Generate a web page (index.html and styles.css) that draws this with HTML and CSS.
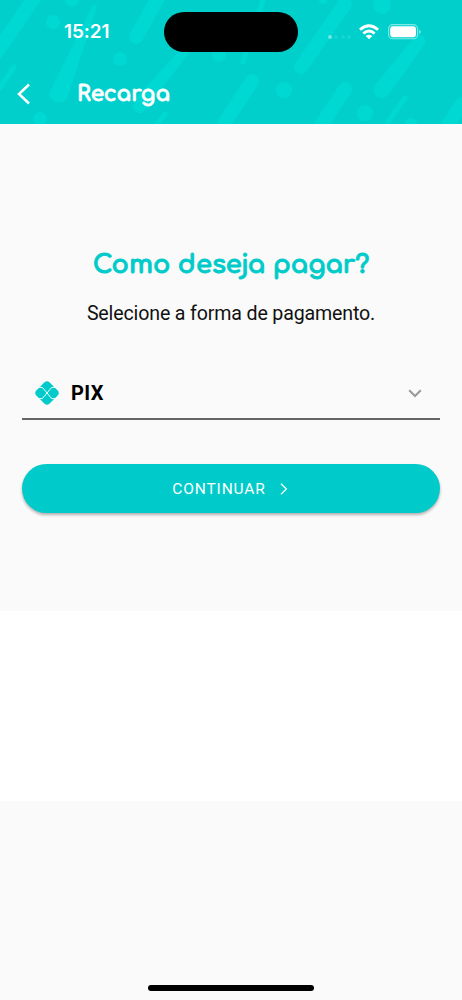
FILE: index.html
```html
<!DOCTYPE html>
<html lang="pt-BR">
  <head>
    <meta charset="UTF-8" />
    <meta name="viewport" content="width=device-width, initial-scale=1.0" />
    <title>Recarga</title>
    <link rel="stylesheet" href="styles.css">
  </head>
  <body>
    <header class="header">
      <svg class="pattern" viewBox="0 0 462 124">
        <g fill="none" stroke="#00d8d4" stroke-linecap="round">
          <path stroke-width="14" d="M37-6L-6 56M160-6L136 37M345 4L301 67M252 81L225 122M345 89L318 130M462 104L445 130" />
          <path stroke-width="5" d="M14 67L0 88M165 114L154 128M264-3L243 62M405 98L388 122" />
        </g>
        <g fill="#00d8d4">
          <path d="M93 5Q96 3 97 7L68 96Q64 105 55 102Q46 97 51 89Z" />
          <path d="M189 40L196 44L145 110Q140 117 134 110Q132 105 136 98Z" />
          <path d="M417 34Q426 34 425 44L389 94Q384 100 377 97Q371 92 375 85Z" />
          <circle cx="53" cy="22" r="7" />
          <circle cx="120" cy="59" r="7" />
          <circle cx="72" cy="0" r="7" />
          <circle cx="40" cy="119" r="7" />
          <circle cx="219" cy="55" r="7" />
          <circle cx="323" cy="0" r="4" />
          <circle cx="382" cy="5" r="9" />
          <circle cx="284" cy="90" r="8" />
          <circle cx="365" cy="113" r="8" />
          <circle cx="411" cy="125" r="7" />
        </g>
      </svg>

      <div class="status">
        <span class="time">15:21</span>
        <span class="island"></span>
        <span class="signal"><i></i><i></i><i></i><i></i></span>
        <svg class="wifi" width="20" height="16" viewBox="0 0 20 16">
          <g fill="none" stroke="#fff" stroke-width="2.8">
            <path d="M.9 5.8Q10-2.2 19.1 5.8" />
            <path d="M4.3 9.5Q10 4.6 15.7 9.5" />
          </g>
          <path fill="#fff" d="M6.7 12Q10 9.3 13.3 12L10 15.3Z" />
        </svg>
        <svg class="battery" width="33" height="16" viewBox="0 0 33 16">
          <rect x=".6" y=".6" width="29" height="14.2" rx="4.4" fill="none" stroke="#7ee9e7" stroke-width="1.1" />
          <rect x="2.2" y="2.2" width="25.8" height="11" rx="3" fill="#fff" />
          <path d="M31.2 5.4Q32.8 6 32.8 7.8T31.2 10.2Z" fill="#7ee9e7" />
        </svg>
      </div>

      <div class="toolbar">
        <svg class="back" width="14" height="22" viewBox="0 0 14 22">
          <path d="M12 1.5L2 11L12 20.5" fill="none" stroke="#fff" stroke-width="2.5" />
        </svg>
        <span class="title">Recarga</span>
      </div>
    </header>

    <main class="content">
      <h1>Como deseja pagar?</h1>
      <p>Selecione a forma de pagamento.</p>

      <div class="select">
        <svg class="pix" width="24" height="24" viewBox="0 0 24 24">
          <path d="M9.6 1.3Q12 -.9 14.4 1.3L22.7 9.6Q24.9 12 22.7 14.4L14.4 22.7Q12 24.9 9.6 22.7L1.3 14.4Q-.9 12 1.3 9.6Z" fill="#00cbca" />
          <path d="M4 6.3H6Q7.2 6.3 8 7.1L16 16.9Q16.8 17.7 18 17.7H20M4 17.7H6Q7.2 17.7 8 16.9L16 7.1Q16.8 6.3 18 6.3H20" fill="none" stroke="#fafafa" stroke-width="1" />
        </svg>
        <span class="option">PIX</span>
        <svg class="arrow" width="14" height="9" viewBox="0 0 14 9">
          <path d="M1.2 1.2L7 7L12.8 1.2" fill="none" stroke="#999" stroke-width="2" />
        </svg>
      </div>

      <button class="btn">
        CONTINUAR
        <svg width="8" height="12" viewBox="0 0 8 12">
          <path d="M1 .8L6.4 6L1 11.2" fill="none" stroke="#fff" stroke-width="1.2" />
        </svg>
      </button>
    </main>

    <div class="blank"></div>

    <footer class="footer">
      <div class="homeBar"></div>
    </footer>
  </body>
</html>
```

FILE: styles.css
```css
* {
  box-sizing: border-box;
}

body {
  margin: 0;
  height: 1000px;
  display: flex;
  flex-direction: column;
  overflow: hidden;
  background-color: #fafafa;
  font-family: Roboto, sans-serif;
}

.header {
  position: relative;
  height: 124px;
  background-color: #00cfcc;
  color: white;
}

.pattern {
  position: absolute;
  top: 0;
  left: 0;
  width: 462px;
  height: 124px;
}

.status {
  position: relative;
  display: flex;
  align-items: center;
  height: 63px;
  padding-left: 64px;
}

.time {
  width: 100px;
  font-family: Inter, sans-serif;
  font-size: 19px;
  font-weight: 600;
  letter-spacing: -0.1px;
}

.island {
  width: 134px;
  height: 40px;
  margin-top: 1px;
  border-radius: 20px;
  background-color: black;
}

.signal {
  display: flex;
  gap: 2.4px;
  margin: 10px 8px 0 30px;
}

.signal i {
  width: 4px;
  height: 4px;
  border-radius: 50%;
  background-color: #16d6d3;
}

.signal i:first-child {
  background-color: #70e7e4;
}

.wifi {
  margin-right: 9px;
}

.toolbar {
  position: relative;
  display: flex;
  align-items: center;
  height: 61px;
  padding-left: 17px;
}

.title {
  margin-left: 46px;
  font-family: Comfortaa, Quicksand, Lato, sans-serif;
  font-size: 21.6px;
  font-weight: bold;
  -webkit-text-stroke: 0.8px white;
}

.content {
  height: 487px;
  padding: 123px 22px 0;
  text-align: center;
}

h1 {
  margin: 0;
  color: #00cbca;
  font-family: Comfortaa, Quicksand, Lato, sans-serif;
  font-size: 25.7px;
  line-height: 36px;
  white-space: nowrap;
  -webkit-text-stroke: 0.9px #00cbca;
}

p {
  margin: 18px 0 0;
  font-size: 19.6px;
  line-height: 26px;
  letter-spacing: -0.15px;
  color: #111;
}

.select {
  display: flex;
  align-items: center;
  height: 54px;
  margin-top: 39px;
  padding: 2px 18px 0 13px;
  border-bottom: 2px solid #666;
}

.option {
  margin-left: 12px;
  font-size: 20px;
  font-weight: bold;
  letter-spacing: 0.4px;
}

.arrow {
  margin-left: auto;
}

.btn {
  display: flex;
  align-items: center;
  justify-content: center;
  gap: 14px;
  width: 418px;
  height: 49px;
  margin-top: 44px;
  padding: 0 8px 0 6px;
  border: none;
  border-radius: 25px;
  background-color: #00cbca;
  box-shadow: 0 2px 3px rgba(0, 0, 0, 0.3);
  color: white;
  font-family: Roboto, sans-serif;
  font-size: 15.5px;
  letter-spacing: 0.85px;
}

.blank {
  height: 190px;
  background-color: white;
}

.footer {
  flex: 1;
  display: flex;
  align-items: flex-end;
  padding: 0 0 9px 148px;
}

.homeBar {
  width: 166px;
  height: 6px;
  border-radius: 3px;
  background-color: black;
}
```
